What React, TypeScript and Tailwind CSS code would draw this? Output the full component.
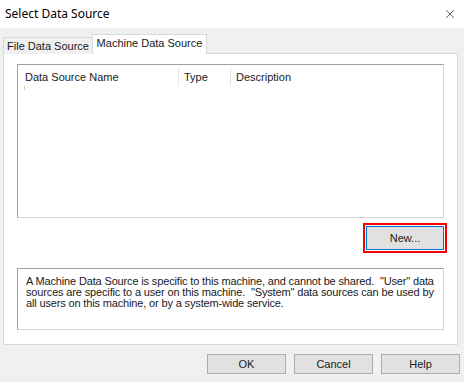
import { X } from "lucide-react";

const btn =
  "w-[79px] h-[20px] border border-[#adadad] bg-[#e1e1e1] text-[11px] text-[#1a1a1a] flex items-center justify-center";

function Header({ label, w }: { label: string; w: string }) {
  return (
    <div
      className={`${w} h-[18px] flex items-center pl-[5px] border-r border-[#e5e5e5] text-[11px] text-[#1a1a1a]`}
    >
      {label}
    </div>
  );
}

export default function App() {
  return (
    <div
      className="w-[464px] h-[382px] bg-[#f0f0f0] flex flex-col overflow-hidden"
      style={{ fontFamily: '"Liberation Sans", Arial, sans-serif' }}
    >
      {/* title bar */}
      <div className="h-[28px] bg-white flex items-center justify-between pl-[5px] pr-[7px] shrink-0">
        <span
          className="text-[12px] text-black"
          style={{ fontFamily: '"Noto Sans", "Open Sans", sans-serif' }}
        >
          Select Data Source
        </span>
        <X className="w-[14px] h-[14px] text-[#222]" strokeWidth={1.25} />
      </div>

      <div className="px-[3px] pt-[6px] flex flex-col">
        {/* tabs */}
        <div className="flex items-end h-[20px] relative z-10 -mb-px">
          <div className="h-[17px] w-[90px] border border-b-0 border-[#d9d9d9] bg-[#f0f0f0] flex items-center justify-center text-[11px] text-[#1a1a1a]">
            File Data Source
          </div>
          <div className="h-[20px] w-[115px] -ml-px border border-b-0 border-[#d9d9d9] bg-white flex items-center justify-center text-[11px] text-[#1a1a1a] pb-[2px]">
            Machine Data Source
          </div>
        </div>

        {/* panel */}
        <div className="w-[455px] h-[292px] border border-[#d9d9d9] bg-white pt-[10px] px-[13px] flex flex-col">
          <div className="h-[154px] border border-[#a0a0a0] border-r-[#d4d4d4] border-b-[#d4d4d4] bg-white pl-[2px] pt-[3px]">
            <div className="flex">
              <Header label="Data Source Name" w="w-[159px]" />
              <Header label="Type" w="w-[52px]" />
              <div className="h-[18px] flex items-center pl-[5px] text-[11px] text-[#1a1a1a]">
                Description
              </div>
            </div>
            <div className="ml-[4px] w-px h-[4px] bg-[#e2c9a0]" />
          </div>

          <div className="flex justify-end mt-[5px]">
            <div className="-mr-[3px] w-[84px] h-[30px] border-2 border-[#ff0000] p-[1px]">
              <div className="w-full h-full border border-[#0078d7] bg-[#e1e1e1] flex items-center justify-center text-[11px] text-[#1a1a1a] pt-[1px]">
                New...
              </div>
            </div>
          </div>

          <div className="mt-[15px] h-[62px] border border-[#a0a0a0] border-r-[#d4d4d4] border-b-[#d4d4d4] pl-[8px] pt-[7px] text-[11px] leading-[11px] tracking-[-0.15px] text-[#1a1a1a] whitespace-nowrap">
            A Machine Data Source is specific to this machine, and cannot be shared.&nbsp; "User" data
            <br />
            sources are specific to a user on this machine.&nbsp; "System" data sources can be used by
            <br />
            all users on this machine, or by a system-wide service.
          </div>
        </div>

        {/* buttons */}
        <div className="flex justify-end gap-[8px] mt-[9px] mr-[1px]">
          <div className={btn}>OK</div>
          <div className={btn}>Cancel</div>
          <div className={btn}>Help</div>
        </div>
      </div>
    </div>
  );
}
